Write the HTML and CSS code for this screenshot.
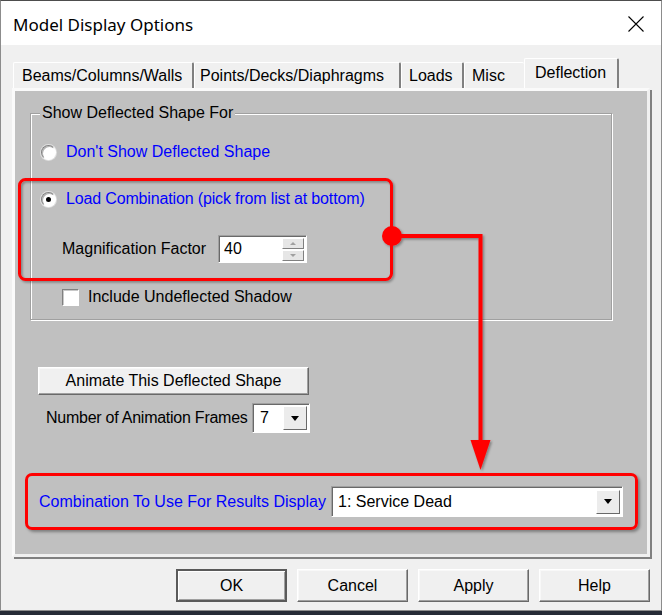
FILE: index.html
```html
<!DOCTYPE html>
<html lang="en">
<head>
    <meta charset="UTF-8">
    <title>Model Display Options</title>
    <link rel="stylesheet" href="styles.css">
</head>
<body>
    <div class="window">
        <div class="titlebar">
            <span class="title">Model Display Options</span>
            <svg class="close" width="16" height="16" viewBox="0 0 16 16">
                <path d="M0.5 0.5 L15.5 15.5 M15.5 0.5 L0.5 15.5" stroke="#000" stroke-width="1.1" fill="none"/>
            </svg>
        </div>

        <div class="dialog">
            <div class="tabs">
                <div class="tab tab-beams">Beams/Columns/Walls</div>
                <div class="tab tab-points">Points/Decks/Diaphragms</div>
                <div class="tab tab-loads">Loads</div>
                <div class="tab tab-misc">Misc</div>
                <div class="tab tab-deflection active">Deflection</div>
            </div>

            <div class="panel">
                <fieldset class="group">
                    <legend>Show Deflected Shape For</legend>
                    <div class="row radio-row first">
                        <span class="radio"></span>
                        <span class="blue">Don't Show Deflected Shape</span>
                    </div>
                    <div class="row radio-row second">
                        <span class="radio checked"></span>
                        <span class="blue tight">Load Combination (pick from list at bottom)</span>
                    </div>
                    <div class="row mag-row">
                        <span class="mag-label">Magnification Factor</span>
                        <div class="spin">
                            <span class="spin-value">40</span>
                            <div class="spin-btns">
                                <span class="spin-btn up"></span>
                                <span class="spin-btn down"></span>
                            </div>
                        </div>
                    </div>
                    <div class="row check-row">
                        <span class="check"></span>
                        <span>Include Undeflected Shadow</span>
                    </div>
                </fieldset>

                <div class="btn animate-btn">Animate This Deflected Shape</div>

                <div class="frames-row">
                    <span class="frames-label">Number of Animation Frames</span>
                    <div class="combo combo-frames">
                        <span class="combo-value">7</span>
                        <span class="combo-btn"><span class="arrow"></span></span>
                    </div>
                </div>

                <div class="callout">
                    <span class="blue callout-label">Combination To Use For Results Display</span>
                    <div class="combo combo-results">
                        <span class="combo-value">1: Service Dead</span>
                        <span class="combo-btn"><span class="arrow"></span></span>
                    </div>
                </div>

                <!-- red annotation drawn over the sheet -->
                <svg class="annot" width="640" height="470" viewBox="0 0 640 470">
                    <defs>
                        <filter id="shadow" x="-10%" y="-10%" width="120%" height="120%">
                            <feDropShadow dx="1.5" dy="1.5" stdDeviation="1" flood-color="#000" flood-opacity="0.35"/>
                        </filter>
                    </defs>
                    <g filter="url(#shadow)">
                        <rect x="4.5" y="88.5" width="372" height="100" rx="6" fill="none" stroke="#ff0000" stroke-width="3"/>
                        <path d="M377 145 H465.5 V352" stroke="#ff0000" stroke-width="4" fill="none"/>
                        <circle cx="377" cy="145" r="10" fill="#ff0000"/>
                        <polygon points="455.5,349 475.5,349 465.5,379" fill="#ff0000"/>
                    </g>
                </svg>
            </div>

            <div class="buttons">
                <div class="btn dlg-btn default">OK</div>
                <div class="btn dlg-btn">Cancel</div>
                <div class="btn dlg-btn">Apply</div>
                <div class="btn dlg-btn">Help</div>
            </div>
        </div>
    </div>
</body>
</html>
```

FILE: styles.css
```css
* {
    box-sizing: border-box;
}
body {
    margin: 0;
    background-color: #262b36;
    font-family: "Liberation Sans", Arial, sans-serif;
    font-size: 16px;
    color: #000;
}
.window {
    width: 662px;
    height: 611px;
    background-color: #f0f0f0;
    border: 1px solid #8c8c8c;
    border-top-color: #4d4d4d;
}
.titlebar {
    height: 44px;
    background-color: #fff;
    display: flex;
    align-items: center;
    justify-content: space-between;
    padding: 0 17px 0 12px;
}
.title {
    font-family: "Noto Sans", sans-serif;
    font-size: 17px;
    margin-top: 2px;
}
.close {
    display: block;
    margin-top: 2px;
}
.dialog {
    padding: 13px 0 0 11px;
}

/* tabs */
.tabs {
    display: flex;
    align-items: flex-end;
    height: 30px;
    margin-left: 1px;
}
.tab {
    height: 26px;
    line-height: 25px;
    background-color: #f0f0f0;
    border-top: 1px solid #fff;
    border-left: 1px solid #fff;
    border-right: 2px solid #808080;
    border-radius: 2px 2px 0 0;
    white-space: nowrap;
}
.tab-beams { width: 181px; padding-left: 8px; }
.tab-points { width: 207px; padding-left: 5px; }
.tab-loads { width: 63px; padding-left: 7px; }
.tab-misc { width: 60px; padding-left: 7px; border-right: none; }
.tab-deflection { width: 95px; padding-left: 10px; }
.tab.active {
    height: 30px;
    line-height: 26px;
    padding-top: 1px;
}

/* gray sheet */
.panel {
    position: relative;
    width: 638px;
    height: 469px;
    background-color: #c0c0c0;
    border: 3px solid;
    border-color: #fafafa #f0f0f0 #f0f0f0 #fafafa;
    box-shadow: 2px 2px 0 #808080;
    padding-top: 13px;
}
.group {
    margin: 0 0 0 15px;
    width: 582px;
    padding: 0 0 12px 9px;
    border: 1px solid #a0a0a0;
    box-shadow: inset 1px 1px 0 #fff, 1px 1px 0 #fff;
    min-inline-size: 0;
}
.group legend {
    padding: 0 2px;
    line-height: 18px;
    background-color: #c0c0c0;
}
.row {
    display: flex;
    align-items: center;
}
.radio-row {
    height: 20px;
    padding-left: 1px;
    gap: 10px;
}
.radio-row.first { margin-top: 20px; }
.radio-row.second { margin-top: 27px; }
.blue {
    color: #0000ff;
}
.tight {
    letter-spacing: -0.15px;
}
.radio {
    width: 15px;
    height: 15px;
    border-radius: 50%;
    background-color: #fff;
    border: 1px solid;
    border-color: #808080 #fff #fff #808080;
    box-shadow: inset 1px 1px 0 #b4b4b4, 0 0 0 1px #e0e0e0;
    display: flex;
    align-items: center;
    justify-content: center;
}
.radio.checked::after {
    content: "";
    width: 5px;
    height: 5px;
    border-radius: 50%;
    background-color: #000;
}
.mag-row {
    margin-top: 26px;
    height: 28px;
    padding-left: 22px;
}
.mag-label {
    width: 156px;
}
.spin {
    width: 89px;
    height: 28px;
    background-color: #fff;
    border: 1px solid;
    border-color: #a0a0a0 #fff #fff #a0a0a0;
    box-shadow: inset 1px 1px 0 #696969;
    display: flex;
    align-items: center;
    justify-content: space-between;
    padding: 0 2px 0 5px;
}
.spin-btns {
    display: flex;
    flex-direction: column;
    gap: 1px;
}
.spin-btn {
    width: 22px;
    height: 11px;
    background-color: #e6e6e6;
    border: 1px solid;
    border-color: #fff #808080 #808080 #fff;
    display: flex;
    align-items: center;
    justify-content: center;
}
.spin-btn::after {
    content: "";
    border-left: 3px solid transparent;
    border-right: 3px solid transparent;
}
.spin-btn.up::after { border-bottom: 3px solid #a0a0a0; }
.spin-btn.down::after { border-top: 3px solid #a0a0a0; }
.check-row {
    margin-top: 24px;
    height: 20px;
    padding-left: 22px;
    gap: 9px;
}
.check {
    width: 17px;
    height: 17px;
    background-color: #fff;
    border: 1px solid;
    border-color: #808080 #fff #fff #808080;
    box-shadow: inset 1px 1px 0 #c8c8c8;
}

/* buttons */
.btn {
    background-color: #f0f0f0;
    border: 1px solid;
    border-color: #fff #696969 #696969 #fff;
    box-shadow: inset -1px -1px 0 #a0a0a0, inset 1px 1px 0 #f8f8f8;
    display: flex;
    align-items: center;
    justify-content: center;
}
.animate-btn {
    margin: 47px 0 0 23px;
    width: 271px;
    height: 28px;
}
.frames-row {
    display: flex;
    align-items: center;
    margin: 8px 0 0 31px;
    height: 30px;
}
.frames-label {
    width: 206px;
    white-space: nowrap;
    letter-spacing: -0.25px;
}
.combo {
    background-color: #fff;
    border: 1px solid;
    border-color: #a0a0a0 #fff #fff #a0a0a0;
    box-shadow: inset 1px 1px 0 #696969;
    display: flex;
    align-items: center;
    justify-content: space-between;
    padding: 0 2px 0 7px;
}
.combo-frames {
    width: 58px;
    height: 30px;
}
.combo-results {
    width: 292px;
    height: 31px;
    padding-left: 6px;
}
.combo-btn {
    width: 24px;
    height: 24px;
    background-color: #ececec;
    border: 1px solid;
    border-color: #fff #696969 #696969 #fff;
    display: flex;
    align-items: center;
    justify-content: center;
}
.arrow {
    border-left: 4px solid transparent;
    border-right: 4px solid transparent;
    border-top: 5px solid #000;
}
.callout {
    margin: 40px 0 0 10px;
    width: 613px;
    height: 57px;
    border: 3px solid #ff0000;
    border-radius: 7px;
    box-shadow: 2px 2px 3px rgba(0, 0, 0, 0.35);
    display: flex;
    align-items: center;
    padding-left: 11px;
}
.callout-label {
    width: 292px;
}
.annot {
    position: absolute;
    top: 0;
    left: 0;
    pointer-events: none;
}

/* dialog buttons */
.buttons {
    display: flex;
    gap: 10px;
    margin: 12px 0 0 164px;
}
.dlg-btn {
    width: 111px;
    height: 33px;
}
.dlg-btn.default {
    border: 2px solid #5a5a5a;
    box-shadow: inset 1px 1px 0 #fff, inset -1px -1px 0 #a0a0a0;
}
```
